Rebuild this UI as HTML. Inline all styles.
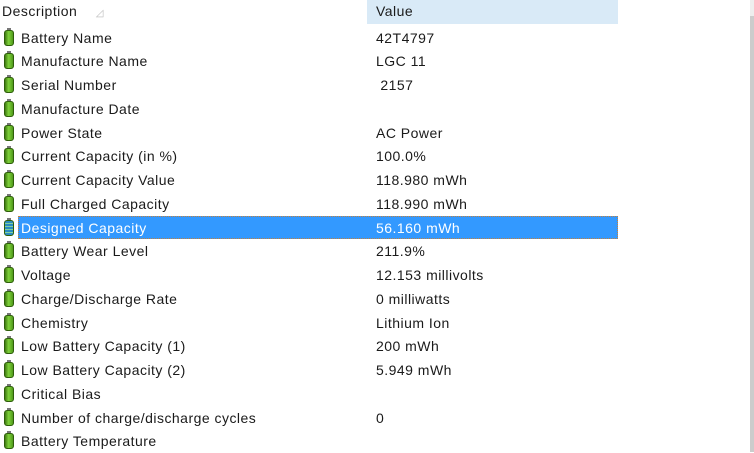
<!DOCTYPE html><html><head><style>
body{margin:0;width:754px;height:452px;background:#fff;overflow:hidden;position:relative;font-family:"Liberation Sans",sans-serif;font-size:14px;letter-spacing:0.48px;color:#1a1a1a}
.h{position:absolute;top:0;height:24px;line-height:22px}
.r{position:absolute;left:0;width:620px;height:24px;line-height:24px}
.ic{position:absolute;left:4px;top:4px;width:10px;height:16px;border-radius:3px;background:linear-gradient(90deg,#3f7a12,#7fd23a 45%,#4f9a1a);border:1px solid #2e5e0a;box-sizing:border-box}
.ic:before{content:"";position:absolute;left:2px;top:-3px;width:4px;height:2px;background:#777}
.d{position:absolute;left:21px}
.v{position:absolute;left:376px}
.sel{position:absolute;left:18px;width:600px;top:0;height:23px;background:#3399ff;outline:1px dotted #c08040;outline-offset:-1px}
.s .d,.s .v{color:#fff}
.s .ic{background:repeating-linear-gradient(0deg,#2a8cc0 0 2px,#7fd0a0 2px 3px)}
</style></head><body>
<div class="h" style="left:2px">Description <span style="color:#bbb;font-size:10px;margin-left:14px">◿</span></div>
<div class="h" style="left:367px;width:251px;background:#d9eaf7;padding-left:9px;box-sizing:border-box">Value</div>
<div style="position:absolute;left:750px;top:0;width:4px;height:16px;background:#eee"></div>
<div style="position:absolute;left:750px;top:16px;width:4px;height:436px;background:#ccc"></div>
<div class="r" style="top:25.5px"><i class="ic"></i><span class="d">Battery Name</span><span class="v">42T4797</span></div>
<div class="r" style="top:49.25px"><i class="ic"></i><span class="d">Manufacture Name</span><span class="v">LGC 11</span></div>
<div class="r" style="top:73px"><i class="ic"></i><span class="d">Serial Number</span><span class="v">&nbsp;2157</span></div>
<div class="r" style="top:96.75px"><i class="ic"></i><span class="d">Manufacture Date</span></div>
<div class="r" style="top:120.5px"><i class="ic"></i><span class="d">Power State</span><span class="v">AC Power</span></div>
<div class="r" style="top:144.25px"><i class="ic"></i><span class="d">Current Capacity (in %)</span><span class="v">100.0%</span></div>
<div class="r" style="top:168px"><i class="ic"></i><span class="d">Current Capacity Value</span><span class="v">118.980 mWh</span></div>
<div class="r" style="top:191.75px"><i class="ic"></i><span class="d">Full Charged Capacity</span><span class="v">118.990 mWh</span></div>
<div class="r s" style="top:215.5px"><div class="sel"></div><i class="ic"></i><span class="d">Designed Capacity</span><span class="v">56.160 mWh</span></div>
<div class="r" style="top:239.25px"><i class="ic"></i><span class="d">Battery Wear Level</span><span class="v">211.9%</span></div>
<div class="r" style="top:263px"><i class="ic"></i><span class="d">Voltage</span><span class="v">12.153 millivolts</span></div>
<div class="r" style="top:286.75px"><i class="ic"></i><span class="d">Charge/Discharge Rate</span><span class="v">0 milliwatts</span></div>
<div class="r" style="top:310.5px"><i class="ic"></i><span class="d">Chemistry</span><span class="v">Lithium Ion</span></div>
<div class="r" style="top:334.25px"><i class="ic"></i><span class="d">Low Battery Capacity (1)</span><span class="v">200 mWh</span></div>
<div class="r" style="top:358px"><i class="ic"></i><span class="d">Low Battery Capacity (2)</span><span class="v">5.949 mWh</span></div>
<div class="r" style="top:381.75px"><i class="ic"></i><span class="d">Critical Bias</span></div>
<div class="r" style="top:405.5px"><i class="ic"></i><span class="d">Number of charge/discharge cycles</span><span class="v">0</span></div>
<div class="r" style="top:429.25px"><i class="ic"></i><span class="d">Battery Temperature</span></div>
</body></html>
